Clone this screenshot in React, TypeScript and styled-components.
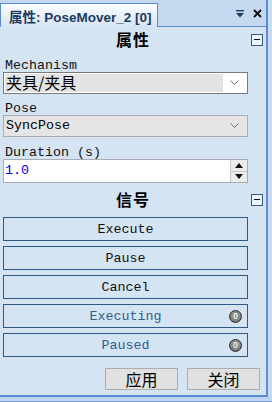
import React from 'react';
import styled, { createGlobalStyle } from 'styled-components';

const Colors = {
  frame: '#c8dbf2',
  header: '#c4d8f0',
  panel: '#d5e4f3',
  border: '#5b8bd0',
  navy: '#1c3a5e',
  button: '#2d5a86',
  signal: '#2e5f8e',
};

const GlobalStyle = createGlobalStyle`
  html, body {
    margin: 0;
    padding: 0;
  }
  body {
    width: 272px;
    height: 402px;
    overflow: hidden;
    background: ${Colors.frame};
    font-family: "Liberation Mono", "Noto Sans CJK SC", monospace;
    font-size: 13.33px;
    color: #111;
  }
`;

function PinIcon() {
  return (
    <svg width="8" height="8" viewBox="0 0 8 8">
      <rect x="0" y="0" width="8" height="1.4" fill={Colors.navy} />
      <path d="M0 3 L8 3 L4 7.5 Z" fill={Colors.navy} />
    </svg>
  );
}

function CloseIcon() {
  return (
    <svg width="9" height="9" viewBox="0 0 9 9">
      <path d="M1 1 L8 8 M8 1 L1 8" stroke="#111" strokeWidth="1.8" />
    </svg>
  );
}

function Chevron() {
  return (
    <svg width="9" height="6" viewBox="0 0 9 6">
      <path d="M0.5 0.5 L4.5 4.5 L8.5 0.5" stroke="#707070" strokeWidth="1" fill="none" />
    </svg>
  );
}

function Arrow({ up }: { up?: boolean }) {
  return (
    <svg width="8" height="5" viewBox="0 0 8 5">
      <path d={up ? 'M0 5 L8 5 L4 0 Z' : 'M0 0 L8 0 L4 5 Z'} fill="#111" />
    </svg>
  );
}

function Heading({ title }: { title: string }) {
  return (
    <HeadingRow>
      <span />
      <HeadingText>{title}</HeadingText>
      <Collapse />
    </HeadingRow>
  );
}

function SignalButton({ label }: { label: string }) {
  return (
    <SignalRow>
      <span />
      <span>{label}</span>
      <Badge>0</Badge>
    </SignalRow>
  );
}

export default function App() {
  return (
    <>
      <GlobalStyle />
      <Frame>
        <Header>
          <Tab>属性: PoseMover_2 [0]</Tab>
          <HeaderRest>
            <PinIcon />
            <CloseIcon />
          </HeaderRest>
        </Header>
        <Panel>
          <Heading title="属性" />
          <Section>
            <Label $top={8}>Mechanism</Label>
            <Select>
              <SelectValue $cjk $highlight>夹具/夹具</SelectValue>
              <ChevronBox>
                <Chevron />
              </ChevronBox>
            </Select>
            <Label $top={8}>Pose</Label>
            <Select $disabled>
              <SelectValue>SyncPose</SelectValue>
              <ChevronBox>
                <Chevron />
              </ChevronBox>
            </Select>
            <Label $top={9}>Duration (s)</Label>
            <NumberBox>
              <NumberValue>1.0</NumberValue>
              <Spin>
                <SpinHalf>
                  <Arrow up />
                </SpinHalf>
                <SpinHalf>
                  <Arrow />
                </SpinHalf>
              </Spin>
            </NumberBox>
          </Section>
          <Spacer />
          <Heading title="信号" />
          <ButtonList>
            <ActionButton>Execute</ActionButton>
            <ActionButton>Pause</ActionButton>
            <ActionButton>Cancel</ActionButton>
            <SignalButton label="Executing" />
            <SignalButton label="Paused" />
          </ButtonList>
          <Footer>
            <DialogButton>应用</DialogButton>
            <DialogButton>关闭</DialogButton>
          </Footer>
        </Panel>
      </Frame>
      <NextStrip />
    </>
  );
}

const Frame = styled.div`
  box-sizing: border-box;
  width: 268px;
  height: 397px;
  border-right: 2px solid ${Colors.border};
  border-bottom: 2px solid ${Colors.border};
  display: flex;
  flex-direction: column;
`;

const Header = styled.div`
  height: 27px;
  display: flex;
  align-items: flex-end;
  background: ${Colors.header};
`;

const Tab = styled.div`
  box-sizing: border-box;
  width: 158px;
  height: 24px;
  padding: 0 0 0 8px;
  border: 1px solid ${Colors.border};
  border-bottom: none;
  background: linear-gradient(#fbfdff, #e4eef8 60%, ${Colors.panel});
  font-family: "Liberation Sans", "Noto Sans CJK SC", sans-serif;
  font-size: 13.5px;
  font-weight: 700;
  color: ${Colors.navy};
  display: flex;
  align-items: center;
  white-space: nowrap;
`;

const HeaderRest = styled.div`
  box-sizing: border-box;
  flex: 1;
  height: 27px;
  border-bottom: 1px solid ${Colors.border};
  display: flex;
  align-items: center;
  justify-content: flex-end;
  gap: 9px;
  padding: 1px 4px 0 0;
`;

const Panel = styled.div`
  flex: 1;
  background: ${Colors.panel};
  display: flex;
  flex-direction: column;
`;

const HeadingRow = styled.div`
  height: 24px;
  display: grid;
  grid-template-columns: 1fr auto 1fr;
  align-items: center;
`;

const HeadingText = styled.span`
  font-family: "Noto Sans CJK SC", sans-serif;
  font-size: 16px;
  font-weight: 700;
  letter-spacing: 1px;
  color: #000;
`;

const Collapse = styled.span`
  justify-self: end;
  margin: 1px 3px 0 0;
  box-sizing: border-box;
  width: 12px;
  height: 12px;
  border: 1px solid #34587e;
  background: #eef4fa;
  position: relative;
  &::after {
    content: '';
    position: absolute;
    left: 2px;
    right: 2px;
    top: 4px;
    height: 1.5px;
    background: #111;
  }
`;

const Section = styled.div`
  padding: 0 18px 0 3px;
  display: flex;
  flex-direction: column;
`;

const Label = styled.div<{ $top: number }>`
  margin-top: ${(p) => p.$top}px;
  padding-left: 2px;
  line-height: 13px;
  white-space: pre;
`;

const Select = styled.div<{ $disabled?: boolean }>`
  box-sizing: border-box;
  height: 22px;
  padding: 1px;
  border: 1px solid ${(p) => (p.$disabled ? '#adadad' : '#7a7a7a')};
  background: ${(p) => (p.$disabled ? '#e5e5e5' : '#fff')};
  display: flex;
  align-items: stretch;
`;

const SelectValue = styled.div<{ $cjk?: boolean; $highlight?: boolean }>`
  flex: 1;
  height: 18px;
  padding-left: 1px;
  background: ${(p) => (p.$highlight ? '#e3e3e3' : 'transparent')};
  font-family: ${(p) =>
    p.$cjk ? '"Noto Sans CJK SC", sans-serif' : '"Liberation Mono", monospace'};
  font-size: ${(p) => (p.$cjk ? '16px' : '13.33px')};
  line-height: ${(p) => (p.$cjk ? '17px' : '18px')};
  color: #000;
  white-space: nowrap;
`;

const ChevronBox = styled.div`
  width: 23px;
  display: flex;
  align-items: center;
  justify-content: center;
`;

const NumberBox = styled.div`
  box-sizing: border-box;
  height: 24px;
  border: 1px solid #abadb3;
  background: #fff;
  display: flex;
`;

const NumberValue = styled.div`
  flex: 1;
  padding-left: 1px;
  line-height: 22px;
  color: #0000ee;
`;

const Spin = styled.div`
  width: 16px;
  display: flex;
  flex-direction: column;
  border-left: 1px solid #c9c9c9;
`;

const SpinHalf = styled.div`
  flex: 1;
  background: #ececec;
  display: flex;
  align-items: center;
  justify-content: center;
  & + & {
    border-top: 1px solid #c9c9c9;
  }
`;

const Spacer = styled.div`
  height: 4px;
`;

const ButtonList = styled.div`
  margin-top: 6px;
  padding: 0 18px 0 3px;
  display: flex;
  flex-direction: column;
  gap: 5px;
`;

const ActionButton = styled.div`
  box-sizing: border-box;
  height: 24px;
  border: 1px solid ${Colors.button};
  display: flex;
  align-items: center;
  justify-content: center;
  color: #111;
`;

const SignalRow = styled.div`
  box-sizing: border-box;
  height: 24px;
  border: 1px solid ${Colors.button};
  display: grid;
  grid-template-columns: 1fr auto 1fr;
  align-items: center;
  color: ${Colors.signal};
`;

const Badge = styled.span`
  justify-self: end;
  margin-right: 5px;
  box-sizing: border-box;
  width: 13px;
  height: 13px;
  border-radius: 50%;
  border: 1.5px solid #2a2a2a;
  background: radial-gradient(circle at 50% 40%, #b0b0b0, #7a7a7a 70%, #555);
  display: flex;
  align-items: center;
  justify-content: center;
  font-family: "Liberation Sans", sans-serif;
  font-size: 9px;
  font-weight: 700;
  line-height: 9px;
  color: #fff;
  text-shadow: 0 0 1px #222;
`;

const Footer = styled.div`
  margin-top: 11px;
  padding-right: 6px;
  display: flex;
  justify-content: flex-end;
  gap: 9px;
`;

const DialogButton = styled.div`
  box-sizing: border-box;
  width: 73px;
  height: 22px;
  border: 1px solid #adadad;
  background: #e1e1e1;
  font-family: "Noto Sans CJK SC", sans-serif;
  font-size: 16px;
  line-height: 20px;
  text-align: center;
  color: #000;
`;

const NextStrip = styled.div`
  height: 4px;
  border-bottom: 1px solid #7aa3da;
  background: #bcd4f2;
`;
